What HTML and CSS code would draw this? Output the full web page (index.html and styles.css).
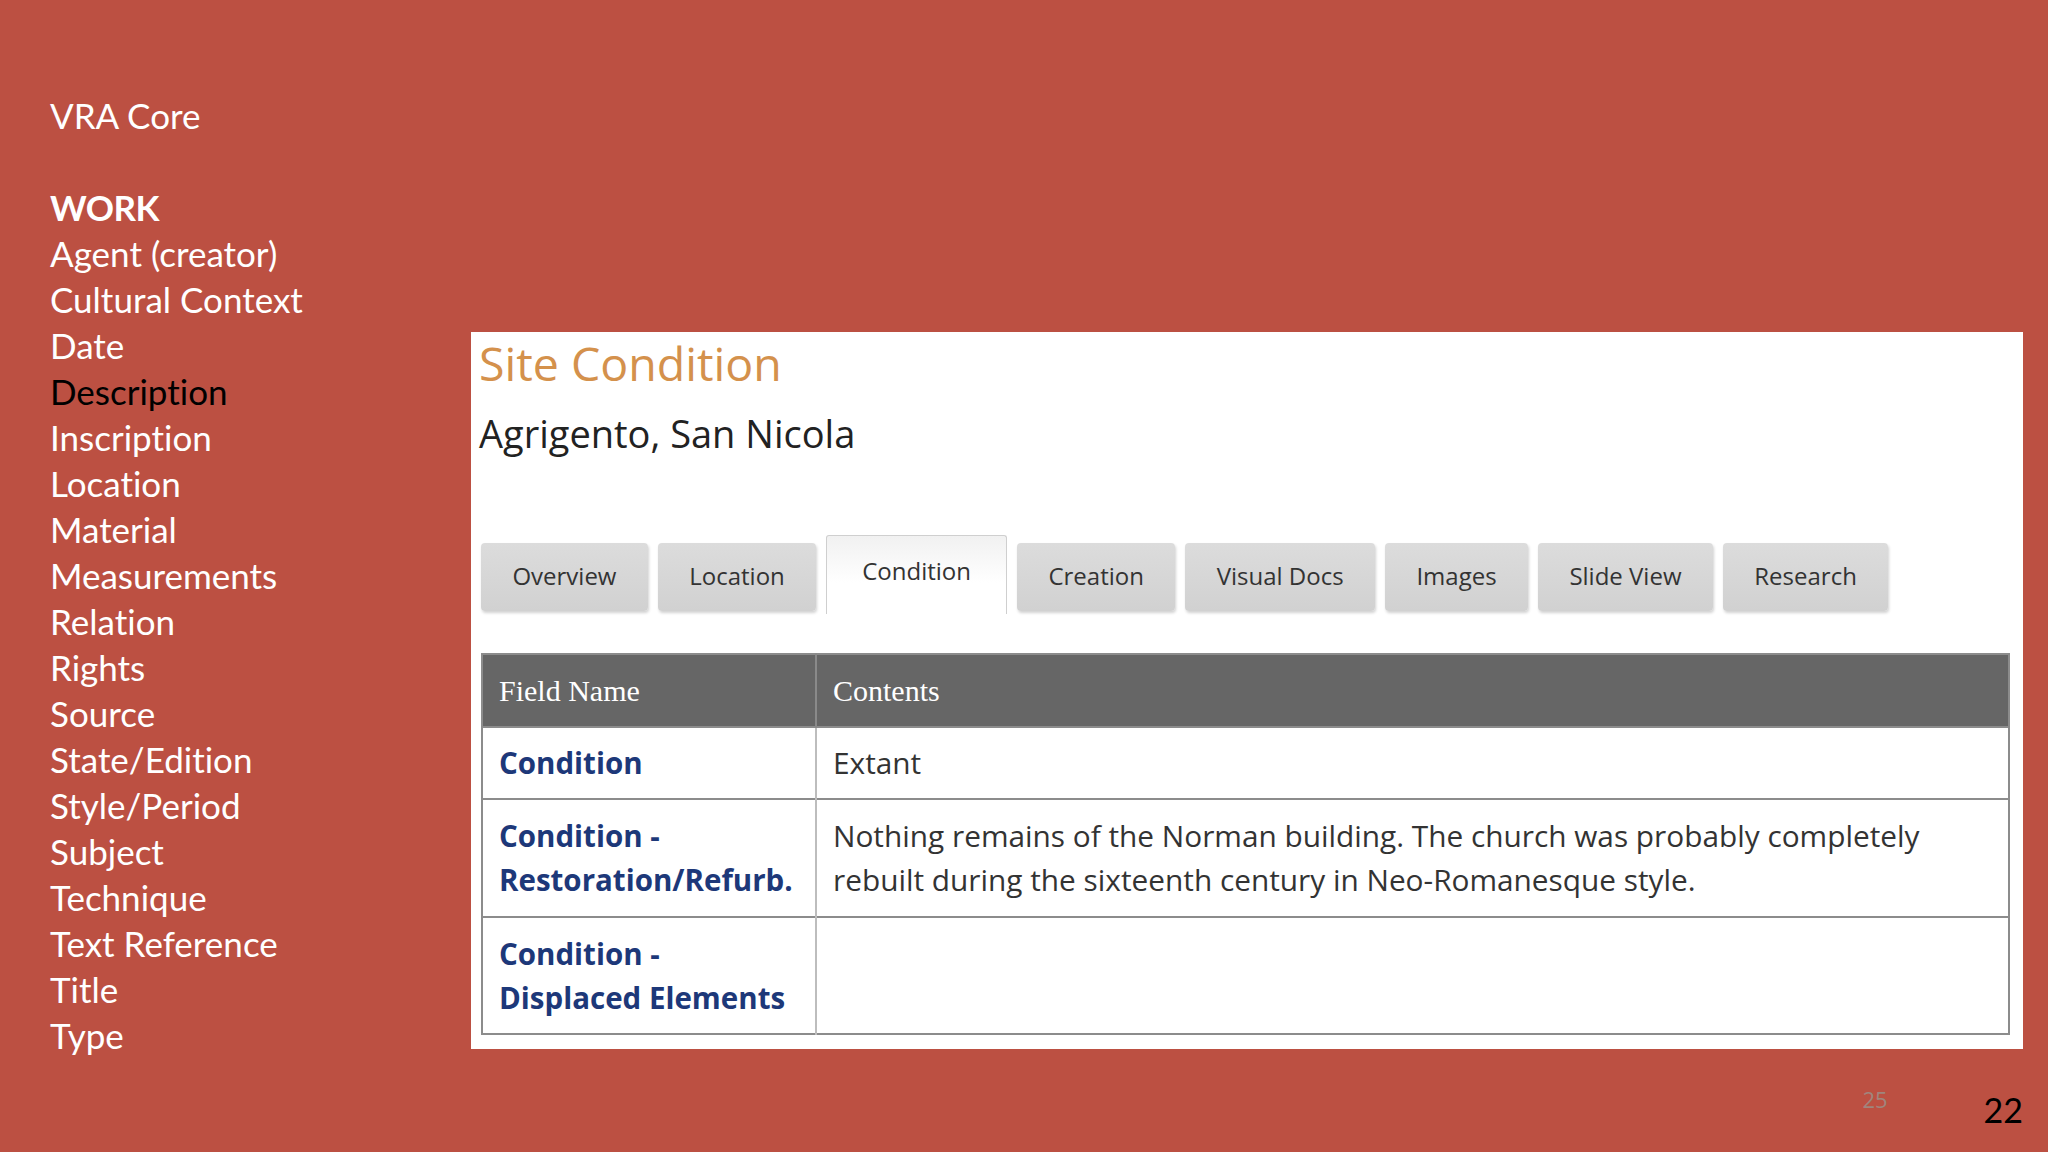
FILE: index.html
```html
<!DOCTYPE html>
<html lang="en">
<head>
<meta charset="utf-8">
<title>VRA Core – Site Condition</title>
<link rel="stylesheet" href="styles.css">
</head>
<body>
<div class="slide">
  <ul class="sidebar">
    <li>VRA Core</li>
    <li class="blank">&nbsp;</li>
    <li class="strong">WORK</li>
    <li>Agent (creator)</li>
    <li>Cultural Context</li>
    <li>Date</li>
    <li class="dark">Description</li>
    <li>Inscription</li>
    <li>Location</li>
    <li>Material</li>
    <li>Measurements</li>
    <li>Relation</li>
    <li>Rights</li>
    <li>Source</li>
    <li>State/Edition</li>
    <li>Style/Period</li>
    <li>Subject</li>
    <li>Technique</li>
    <li>Text Reference</li>
    <li>Title</li>
    <li>Type</li>
  </ul>
  <div class="main">
    <div class="panel">
      <h1 class="title">Site Condition</h1>
      <h2 class="subtitle">Agrigento, San Nicola</h2>
      <div class="tabs">
        <div class="tab">Overview</div>
        <div class="tab">Location</div>
        <div class="tab active">Condition</div>
        <div class="tab">Creation</div>
        <div class="tab">Visual Docs</div>
        <div class="tab">Images</div>
        <div class="tab">Slide View</div>
        <div class="tab">Research</div>
      </div>
      <table class="fields">
        <thead>
          <tr class="head"><th class="col-name">Field Name</th><th>Contents</th></tr>
        </thead>
        <tbody>
          <tr class="r1"><td class="label">Condition</td><td class="value">Extant</td></tr>
          <tr class="r2"><td class="label">Condition -<br>Restoration/Refurb.</td><td class="value">Nothing remains of the Norman building. The church was probably completely<br>rebuilt during the sixteenth century in Neo-Romanesque style.</td></tr>
          <tr class="r3"><td class="label">Condition -<br>Displaced Elements</td><td class="value"></td></tr>
        </tbody>
      </table>
    </div>
    <div class="footer">
      <span class="ghost-num">25</span>
      <span class="slide-num">22</span>
    </div>
  </div>
</div>
</body>
</html>
```
FILE: styles.css
```css
html, body {
  margin: 0;
  padding: 0;
}
body {
  width: 2048px;
  height: 1152px;
  overflow: hidden;
  background: #bc5042;
}
.slide {
  display: flex;
  width: 2048px;
  height: 1152px;
}
.sidebar {
  list-style: none;
  margin: 0;
  width: 471px;
  box-sizing: border-box;
  padding: 92px 0 0 50px;
  font-family: Lato, "Open Sans", sans-serif;
  font-size: 35px;
  line-height: 46px;
  color: #ffffff;
  font-variant-ligatures: no-common-ligatures;
}
.sidebar li { white-space: nowrap; }
.sidebar .strong { font-weight: 700; letter-spacing: -0.5px; }
.sidebar .dark { color: #000000; }

.main {
  width: 1552px;
  padding-top: 332px;
  display: flex;
  flex-direction: column;
}
.panel {
  background: #ffffff;
  height: 717px;
  box-sizing: border-box;
  padding: 3px 13px 0 8px;
  font-family: "Open Sans", sans-serif;
}
.title {
  margin: 0;
  font-size: 46.5px;
  line-height: 56px;
  font-weight: 400;
  color: #d4914c;
}
.subtitle {
  margin: 17px 0 0 0;
  font-size: 38px;
  line-height: 50px;
  font-weight: 400;
  color: #222222;
}
.tabs {
  display: flex;
  align-items: flex-end;
  gap: 10px;
  margin: 77px 0 0 2px;
}
.tab {
  height: 68px;
  box-sizing: border-box;
  padding: 0 31.4px 3px;
  display: flex;
  align-items: center;
  font-size: 24px;
  color: #333333;
  background: linear-gradient(#dcdcdc, #d1d1d1);
  border-radius: 4px;
  box-shadow: 1px 2px 3px rgba(0, 0, 0, 0.18);
  white-space: nowrap;
}
.tab.active {
  height: 79px;
  margin-bottom: -3px;
  padding: 0 35px 10px;
  background: linear-gradient(#f1f1f1, #ffffff 60%);
  border: 1px solid #cfcfcf;
  border-bottom: none;
  border-radius: 3px 3px 0 0;
  box-shadow: none;
}
.fields {
  margin: 42px 0 0 2px;
  width: 1529px;
  border-collapse: collapse;
  border: 2px solid #8c8c8c;
}
.fields th, .fields td {
  padding: 0 16px;
  text-align: left;
  vertical-align: middle;
}
.head {
  height: 73px;
  background: #666666;
}
.head th {
  font-family: "Liberation Serif", serif;
  font-weight: 400;
  font-size: 30px;
  color: #ffffff;
  border-left: 2px solid #8a8a8a;
}
.head th.col-name {
  width: 300px;
  border-left: none;
}
.fields tbody td {
  border-top: 2px solid #8c8c8c;
  line-height: 44px;
}
.fields tbody td + td { border-left: 2px solid #bdbdbd; }
.r1 { height: 72px; }
.r2 { height: 118px; }
.r3 { height: 117px; }
.label {
  font-size: 29.5px;
  font-weight: 700;
  color: #1d3879;
  white-space: nowrap;
}
.value {
  font-size: 29.8px;
  color: #333333;
}
.footer {
  display: flex;
  justify-content: flex-end;
  align-items: flex-start;
}
.ghost-num {
  margin: 35px 96px 0 0;
  font-family: "Open Sans", sans-serif;
  font-size: 22px;
  line-height: 30px;
  color: #a0857d;
}
.slide-num {
  margin-top: 41px;
  font-family: Lato, sans-serif;
  font-size: 34px;
  line-height: 40px;
  color: #000000;
}
```
